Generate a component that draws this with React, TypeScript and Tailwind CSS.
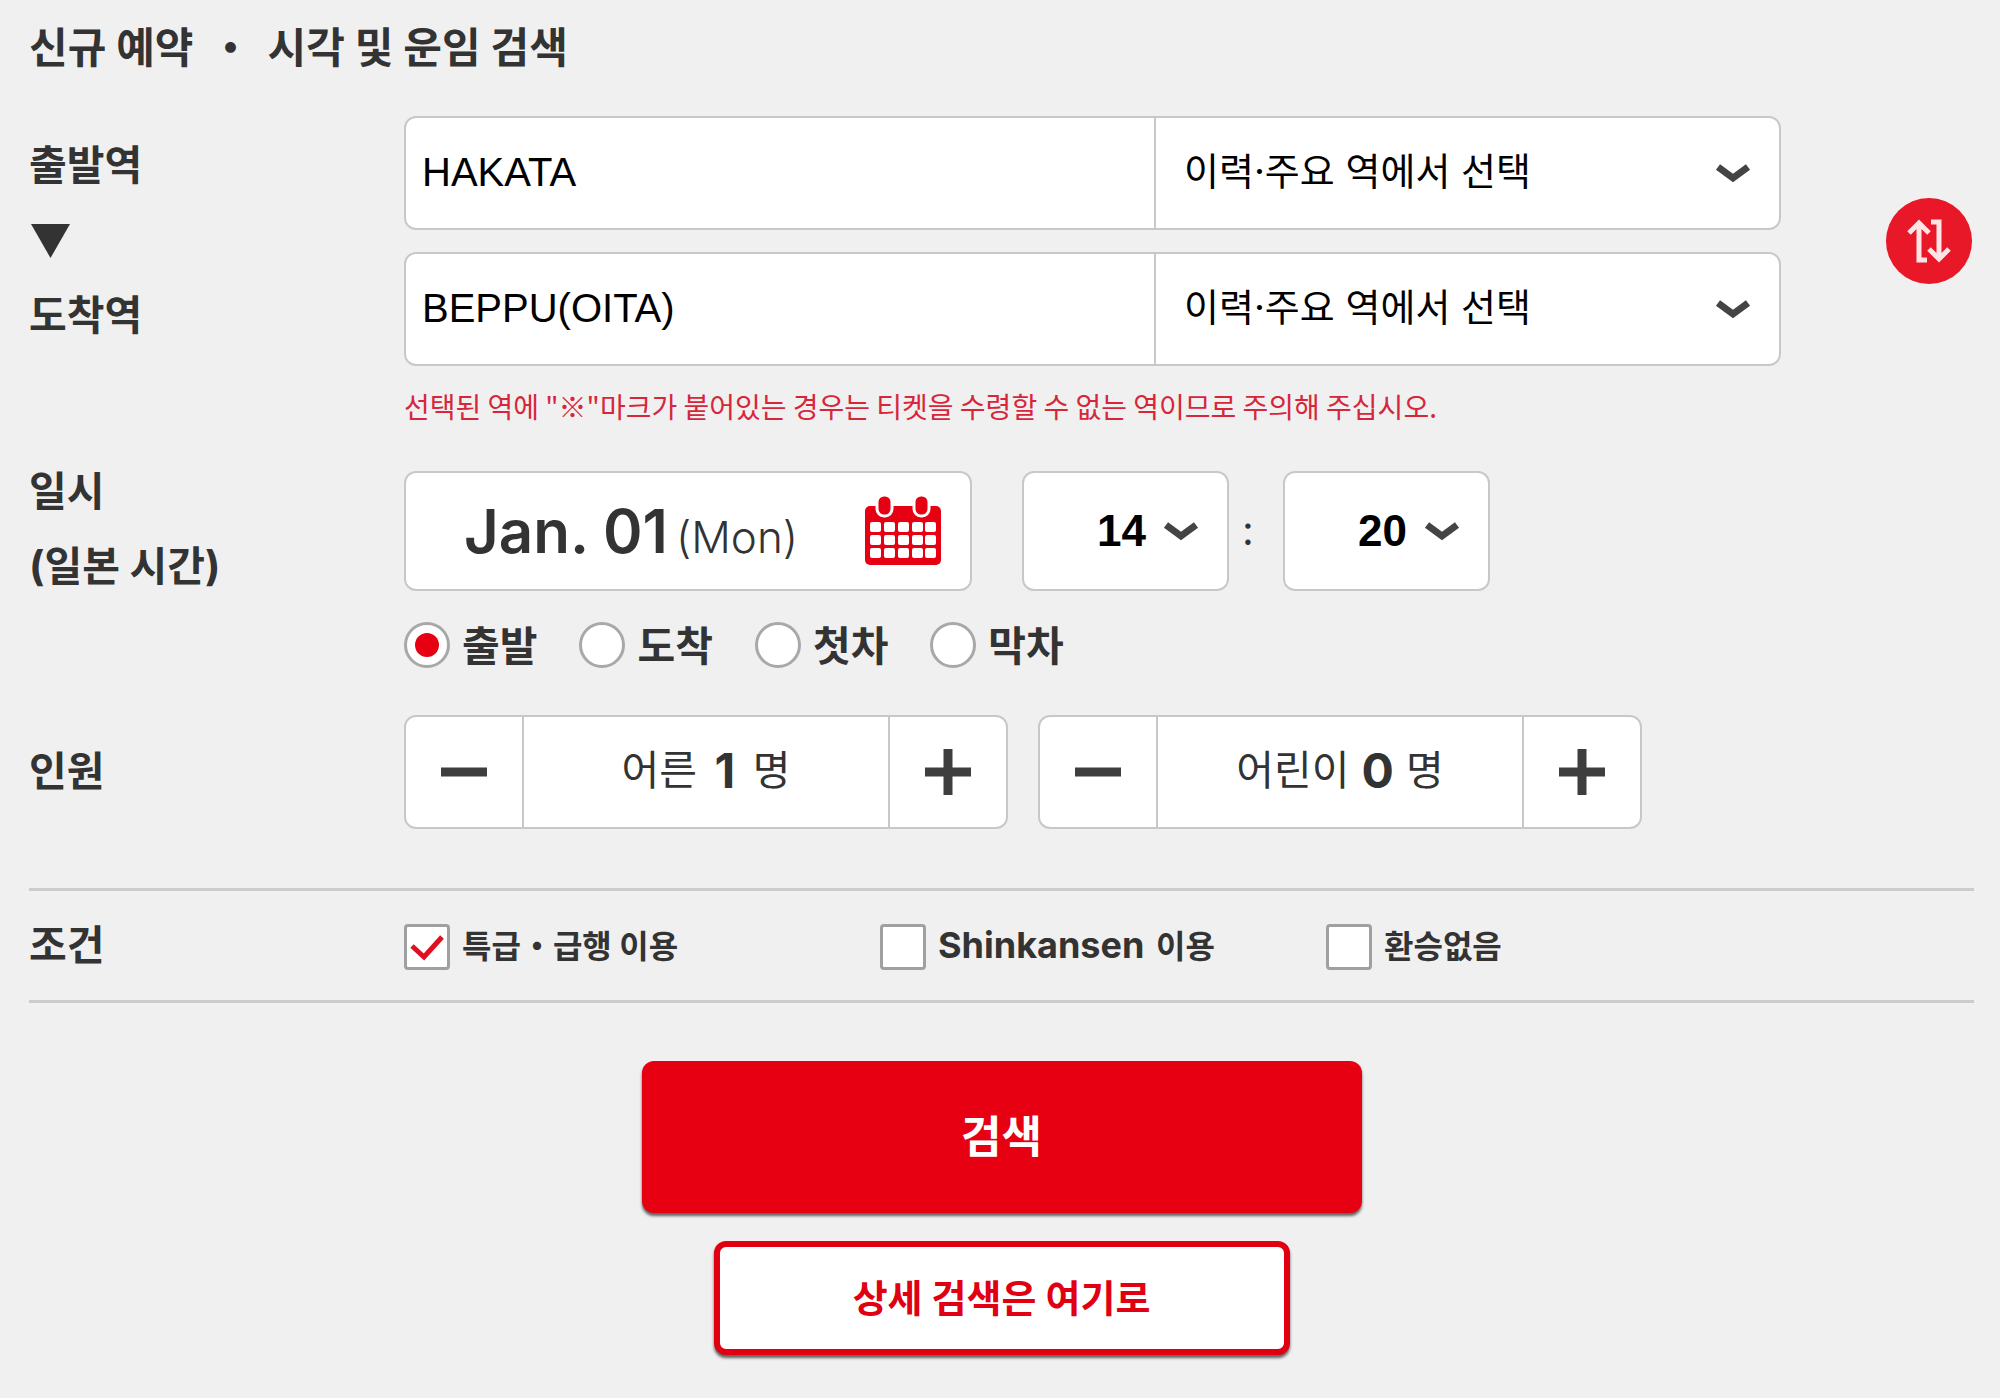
import { useState } from 'react';
import type { ReactNode } from 'react';
import clsx from 'clsx';

const STATION_OPTIONS = ['이력·주요 역에서 선택', 'HAKATA', 'KOKURA', 'BEPPU(OITA)', 'OITA'];
const HOURS = Array.from({ length: 24 }, (_, i) => i.toString().padStart(2, '0'));
const MINUTES = ['00', '10', '20', '30', '40', '50'];
const TIME_TYPES = ['출발', '도착', '첫차', '막차'];

function ChevronIcon({ className }: { className?: string }) {
  return (
    <svg
      className={clsx('pointer-events-none absolute top-1/2 h-5 w-9 -translate-y-1/2', className)}
      viewBox="0 0 36 20"
      fill="none"
      stroke="#444"
      strokeWidth={7}
      aria-hidden="true"
    >
      <path d="M3 4l15 11L33 4" />
    </svg>
  );
}

function CalendarIcon() {
  return (
    <svg className="h-[70px] w-[78px] shrink-0" viewBox="0 0 78 70" aria-hidden="true">
      <rect x="1" y="10" width="76" height="59" rx="5" fill="#e60012" />
      <g fill="#e60012" stroke="#fff" strokeWidth="3">
        <rect x="13" y="-1" width="15" height="21" rx="7" />
        <rect x="50" y="-1" width="15" height="21" rx="7" />
      </g>
      <g fill="#fff">
        {[26, 39, 52].map((y) =>
          [6, 20, 34, 48, 61].map((x) => (
            <rect key={`${x}-${y}`} x={x} y={y} width="11" height="10" rx="2" />
          ))
        )}
      </g>
    </svg>
  );
}

function SwapIcon() {
  return (
    <svg
      className="h-[44px] w-[44px]"
      viewBox="0 0 44 44"
      fill="none"
      stroke="#ffe4e6"
      strokeWidth={5}
      aria-hidden="true"
    >
      <path d="M20 41h-8V4M2 14L12 4l10 10" />
      <path d="M24 3h8v37M22 30l10 10 10-10" />
    </svg>
  );
}

interface StationFieldProps {
  id: string;
  label: string;
  value: string;
  onChange: (value: string) => void;
}

function StationField({ id, label, value, onChange }: StationFieldProps) {
  return (
    <div className="grid h-[114px] grid-cols-[748fr_625fr] overflow-hidden rounded-xl border-2 border-[#c8c8c8] bg-white text-black">
      <input
        id={id}
        type="text"
        value={value}
        onChange={(e) => onChange(e.target.value)}
        className="min-w-0 px-4 pb-0.5 text-[40px] font-[Liberation_Sans,sans-serif]"
      />
      <div className="relative min-w-0 border-l-2 border-[#c8c8c8]">
        <select
          aria-label={`${label} 선택`}
          onChange={(e) => onChange(e.target.value)}
          defaultValue={STATION_OPTIONS[0]}
          className="h-full w-full appearance-none bg-transparent pb-1 pl-7 text-[38px]"
        >
          {STATION_OPTIONS.map((name) => (
            <option key={name}>{name}</option>
          ))}
        </select>
        <ChevronIcon className="right-7" />
      </div>
    </div>
  );
}

interface TimeSelectProps {
  label: string;
  value: string;
  options: string[];
  onChange: (value: string) => void;
}

function TimeSelect({ label, value, options, onChange }: TimeSelectProps) {
  return (
    <div className="relative h-[120px] w-[207px] rounded-xl border-2 border-[#c8c8c8] bg-white">
      <select
        aria-label={label}
        value={value}
        onChange={(e) => onChange(e.target.value)}
        className="h-full w-full appearance-none bg-transparent pl-[73px] text-[44px] font-bold text-black font-[Liberation_Sans,sans-serif]"
      >
        {options.map((option) => (
          <option key={option}>{option}</option>
        ))}
      </select>
      <ChevronIcon className="right-7" />
    </div>
  );
}

interface CounterProps {
  label: string;
  value: number;
  onChange: (value: number) => void;
}

function Counter({ label, value, onChange }: CounterProps) {
  return (
    <div className="flex h-[114px] w-[604px] overflow-hidden rounded-xl border-2 border-[#c8c8c8] bg-white">
      <button
        type="button"
        aria-label={`${label} 감소`}
        onClick={() => onChange(Math.max(0, value - 1))}
        className="flex w-[116px] items-center justify-center"
      >
        <svg className="h-12 w-12" viewBox="0 0 48 48" stroke="#3e3e3e" strokeWidth={9} aria-hidden="true">
          <path d="M1 24h46" />
        </svg>
      </button>
      <output className="flex flex-1 items-center justify-center gap-3 border-x-2 border-[#c8c8c8] pb-0.5 text-[41px]">
        <span>{label}</span>
        <span className="min-w-8 text-center text-5xl font-bold">{value}</span>
        <span>명</span>
      </output>
      <button
        type="button"
        aria-label={`${label} 증가`}
        onClick={() => onChange(value + 1)}
        className="flex w-[116px] items-center justify-center"
      >
        <svg className="h-12 w-12" viewBox="0 0 48 48" stroke="#3e3e3e" strokeWidth={9} aria-hidden="true">
          <path d="M1 24h46M24 1v46" />
        </svg>
      </button>
    </div>
  );
}

interface ConditionProps {
  defaultChecked?: boolean;
  children: ReactNode;
}

function Condition({ defaultChecked, children }: ConditionProps) {
  return (
    <label className="flex items-center gap-3 text-[32px] font-bold">
      <span className="relative flex">
        <input
          type="checkbox"
          defaultChecked={defaultChecked}
          className="peer size-[46px] appearance-none rounded-sm border-3 border-[#a0a0a0] bg-white"
        />
        <svg
          className="pointer-events-none absolute inset-0 hidden size-[46px] peer-checked:block"
          viewBox="0 0 46 46"
          fill="none"
          stroke="#e01020"
          strokeWidth={5}
          aria-hidden="true"
        >
          <path d="M8 22l12 11L38 13" />
        </svg>
      </span>
      <span>{children}</span>
    </label>
  );
}

export default function App() {
  const [from, setFrom] = useState('HAKATA');
  const [to, setTo] = useState('BEPPU(OITA)');
  const [hour, setHour] = useState('14');
  const [minute, setMinute] = useState('20');
  const [timeType, setTimeType] = useState('출발');
  const [adults, setAdults] = useState(1);
  const [children, setChildren] = useState(0);

  const swapStations = () => {
    setFrom(to);
    setTo(from);
  };

  return (
    <form
      onSubmit={(e) => e.preventDefault()}
      className="min-h-screen bg-[#f0f0f0] pt-[18px] pr-[26px] pb-10 pl-[29px] text-[41px] text-[#333] font-[Inter,Noto_Sans_CJK_KR,sans-serif]"
    >
      <h1 className="flex gap-4 text-[42px] leading-[60px] font-bold">
        <span>신규 예약</span>
        <span>・</span>
        <span>시각 및 운임 검색</span>
      </h1>

      {/* Stations */}
      <div className="mt-[38px] grid grid-cols-[375px_1fr]">
        <div className="pt-3 leading-[75px] font-bold">
          <label htmlFor="from" className="block">
            출발역
          </label>
          <div className="flex h-[75px] items-center">
            <svg className="h-[34px] w-[42px]" viewBox="0 0 42 34" fill="#333" aria-hidden="true">
              <path d="M2 0h39L21.500 34z" />
            </svg>
          </div>
          <label htmlFor="to" className="block">
            도착역
          </label>
        </div>
        <div>
          <div className="flex items-center justify-between pr-0.5">
            <div className="flex w-[1377px] flex-col gap-[22px]">
              <StationField id="from" label="출발역" value={from} onChange={setFrom} />
              <StationField id="to" label="도착역" value={to} onChange={setTo} />
            </div>
            <button
              type="button"
              aria-label="출발역과 도착역 바꾸기"
              onClick={swapStations}
              className="flex size-[86px] items-center justify-center rounded-full bg-[#e81828]"
            >
              <SwapIcon />
            </button>
          </div>
          <p className="mt-5 text-[28px] leading-10 text-[#d7263a] font-[Noto_Sans_CJK_KR,sans-serif]">
            선택된 역에 "※"마크가 붙어있는 경우는 티켓을 수령할 수 없는 역이므로 주의해 주십시오.
          </p>
        </div>
      </div>

      {/* Date and time */}
      <div className="mt-7 grid grid-cols-[375px_1fr]">
        <div className="leading-[75px] font-bold">
          <div>일시</div>
          <div>(일본 시간)</div>
        </div>
        <div className="pt-[17px]">
          <div className="flex items-center">
            <button
              type="button"
              className="flex h-[120px] w-[568px] items-center justify-between rounded-xl border-2 border-[#c8c8c8] bg-white pr-7 pl-[58px]"
            >
              <span className="flex items-baseline gap-2">
                <span className="text-[60px] font-semibold">Jan. 01</span>
                <span className="text-[44px] font-light">(Mon)</span>
              </span>
              <CalendarIcon />
            </button>
            <div className="ml-[50px] flex items-center">
              <TimeSelect label="시" value={hour} options={HOURS} onChange={setHour} />
              <span className="w-[54px] pr-4 text-center">:</span>
              <TimeSelect label="분" value={minute} options={MINUTES} onChange={setMinute} />
            </div>
          </div>
          <div className="mt-[30px] flex h-12 items-center gap-[42px]">
            {TIME_TYPES.map((type) => (
              <label key={type} className="flex items-center gap-3 font-bold">
                <span className="relative flex">
                  <input
                    type="radio"
                    name="timeType"
                    checked={timeType === type}
                    onChange={() => setTimeType(type)}
                    className="peer size-[46px] appearance-none rounded-full border-3 border-[#a8a8a8] bg-white"
                  />
                  <span className="pointer-events-none absolute inset-[11px] hidden rounded-full bg-[#e60012] peer-checked:block" />
                </span>
                <span className="pt-1">{type}</span>
              </label>
            ))}
          </div>
        </div>
      </div>

      {/* Passengers */}
      <div className="mt-[46px] grid grid-cols-[375px_1fr] items-center">
        <div className="font-bold">인원</div>
        <div className="flex gap-[30px]">
          <Counter label="어른" value={adults} onChange={setAdults} />
          <Counter label="어린이" value={children} onChange={setChildren} />
        </div>
      </div>

      {/* Conditions */}
      <div className="mt-[59px] grid h-[115px] grid-cols-[375px_1fr] items-center border-y-3 border-[#ccc]">
        <div className="font-bold">조건</div>
        <div className="grid grid-cols-[476px_446px_1fr] pt-0.5">
          <Condition defaultChecked>특급・급행 이용</Condition>
          <Condition>
            <span className="mr-1 text-4xl font-bold">Shinkansen</span> 이용
          </Condition>
          <Condition>환승없음</Condition>
        </div>
      </div>

      <div className="mt-[58px] flex flex-col items-center gap-7 font-bold">
        <button
          type="submit"
          className="h-[152px] w-[720px] rounded-xl bg-[#e60012] text-[44px] text-white shadow-[0_3px_3px_rgba(0,0,0,0.6)]"
        >
          검색
        </button>
        <button
          type="button"
          className="h-[114px] w-[576px] rounded-xl border-6 border-[#e00012] bg-white text-[38px] text-[#e00012] shadow-[0_3px_3px_rgba(0,0,0,0.6)]"
        >
          상세 검색은 여기로
        </button>
      </div>
    </form>
  );
}
